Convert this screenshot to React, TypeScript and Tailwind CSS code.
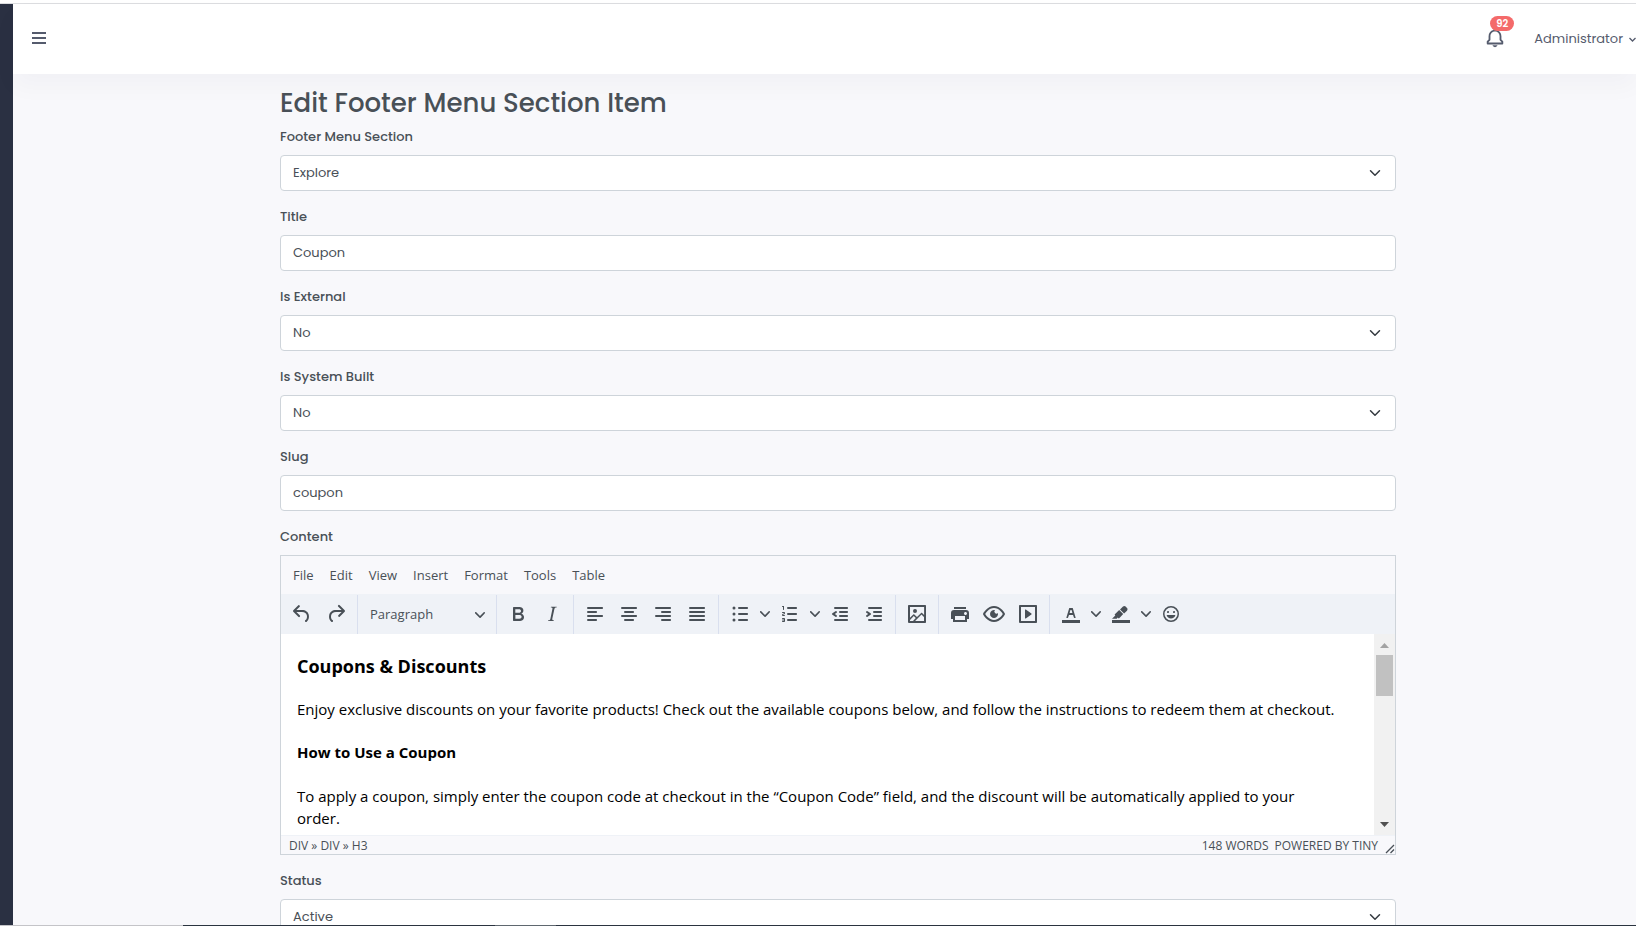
import React, { useId } from "react";

const BODY = "font-['Poppins','Inter',sans-serif]";
const EDITOR = "font-['Segoe_UI','Open_Sans','Noto_Sans',sans-serif]";

const CHEVRON = "M8.7 2.2c.3-.3.8-.3 1 0 .4.4.4.9 0 1.2L5.7 7.8c-.3.3-.9.3-1.2 0L.2 3.4a.8.8 0 0 1 0-1.2c.3-.3.8-.3 1.1 0L5 6l3.7-3.8z";

const bar = (x: number, y: number, w: number) =>
  `M${x} ${y}h${w}c.6 0 1 .4 1 1s-.4 1-1 1h-${w}a1 1 0 0 1 0-2z`;

const icons: Record<string, string> = {
  undo: "M6.4 8H12c3.7 0 6.2 2 6.8 5.1.6 2.7-.4 5.6-2.3 6.8a1 1 0 0 1-1-1.8c1.1-.6 1.8-2.7 1.4-4.6-.5-2.1-2.1-3.5-4.9-3.5H6.4l3.3 3.3a1 1 0 1 1-1.4 1.4l-5-5a1 1 0 0 1 0-1.4l5-5a1 1 0 0 1 1.4 1.4L6.4 8z",
  redo: "M17.6 10H12c-2.8 0-4.4 1.4-4.9 3.5-.4 2 .3 4 1.4 4.6a1 1 0 1 1-1 1.8c-2-1.2-2.9-4.1-2.3-6.8.6-3 3-5.1 6.8-5.1h5.6l-3.3-3.3a1 1 0 1 1 1.4-1.4l5 5a1 1 0 0 1 0 1.4l-5 5a1 1 0 0 1-1.4-1.4l3.3-3.3z",
  bold: "M7.8 19c-.3 0-.5 0-.6-.2l-.2-.5V5.7c0-.2 0-.4.2-.5l.6-.2h5c1.5 0 2.7.3 3.5 1 .7.6 1.1 1.4 1.1 2.5a3 3 0 0 1-.6 1.9c-.4.6-1 1-1.6 1.2.4.1.9.3 1.3.6s.8.7 1 1.2c.4.4.5 1 .5 1.6 0 1.3-.4 2.3-1.3 3-.8.7-2.1 1-3.8 1H7.8zm5-8.3c.6 0 1.2-.1 1.6-.5.4-.3.6-.7.6-1.3 0-1.1-.8-1.7-2.3-1.7H9.3v3.5h3.4zm.5 6c.7 0 1.3-.1 1.7-.4.4-.4.6-.9.6-1.5s-.2-1-.7-1.4c-.4-.3-1-.4-2-.4H9.4v3.8h4z",
  italic: "M16.7 4.7l-.1.9h-.3c-.6 0-1 0-1.4.3-.3.3-.4.6-.5 1.1l-2.1 9.8v.6c0 .5.4.8 1.4.8h.2l-.2.8H8l.2-.8h.2c1.1 0 1.8-.5 2-1.5l2-9.8.1-.5c0-.6-.4-.8-1.4-.8h-.3l.2-.9h5.8z",
  left: bar(5, 5, 14) + bar(5, 9, 8) + bar(5, 13, 14) + bar(5, 17, 8),
  center: bar(5, 5, 14) + bar(8, 9, 8) + bar(5, 13, 14) + bar(8, 17, 8),
  right: bar(5, 5, 14) + bar(11, 9, 8) + bar(5, 13, 14) + bar(11, 17, 8),
  justify: bar(5, 5, 14) + bar(5, 9, 14) + bar(5, 13, 14) + bar(5, 17, 14),
  bullets:
    bar(11, 5, 8) + bar(11, 11, 8) + bar(11, 17, 8) +
    "M4.5 6a1.5 1.5 0 1 1 3 0 1.5 1.5 0 0 1-3 0zM4.5 12a1.5 1.5 0 1 1 3 0 1.5 1.5 0 0 1-3 0zM4.5 18a1.5 1.5 0 1 1 3 0 1.5 1.5 0 0 1-3 0z",
  numbers:
    bar(10, 5, 8) + bar(10, 11, 8) + bar(10, 17, 8) +
    "M6 4v3.5c0 .3-.2.5-.5.5a.5.5 0 0 1-.5-.5V5h-.5a.5.5 0 0 1 0-1H6zM5 12.8l.2.2h1.3c.3 0 .5.2.5.5s-.2.5-.5.5H4.9a1 1 0 0 1-.9-1V13c0-.4.3-.8.6-1l1.2-.4.2-.3a.2.2 0 0 0-.2-.2H4.5a.5.5 0 0 1-.5-.5c0-.3.2-.5.5-.5h1.6c.5 0 .9.4.9 1v.1c0 .4-.3.8-.6 1l-1.2.4-.2.3zM7 17v2c0 .6-.4 1-1 1H4.5a.5.5 0 0 1 0-1h1.2c.2 0 .3-.1.3-.3 0-.2-.1-.3-.3-.3H4.4a.4.4 0 1 1 0-.8h1.3c.2 0 .3-.1.3-.3 0-.2-.1-.3-.3-.3H4.5a.5.5 0 1 1 0-1H6c.6 0 1 .4 1 1z",
  outdent:
    bar(7, 5, 12) + bar(12, 9, 7) + bar(12, 13, 7) + bar(7, 17, 12) +
    "M8.6 13.2a1 1 0 0 1-1.2 1.6l-3-2a1 1 0 0 1 0-1.6l3-2a1 1 0 0 1 1.2 1.6L6.8 12l1.8 1.2z",
  indent:
    bar(7, 5, 12) + bar(12, 9, 7) + bar(12, 13, 7) + bar(7, 17, 12) +
    "M4.4 13.2a1 1 0 1 0 1.2 1.6l3-2a1 1 0 0 0 0-1.6l-3-2a1 1 0 1 0-1.2 1.6L6.2 12l-1.8 1.2z",
  image: "M5 15.7l3.3-3.2c.3-.3.7-.3 1 0L12 15l4.1-4c.3-.4.8-.4 1 0l2 1.9V5H5v10.7zM5 18v1h3l2.8-2.9-2-2L5 17.9zM19 15l-2.5-2.4-6.4 6.5H19v-4zM4 3h16c.6 0 1 .4 1 1v16c0 .6-.4 1-1 1H4a1 1 0 0 1-1-1V4c0-.6.4-1 1-1zM10 11a2 2 0 1 0 0-4 2 2 0 0 0 0 4z",
  print: "M18 8H6a3 3 0 0 0-3 3v6h2v3h14v-3h2v-6a3 3 0 0 0-3-3zm-1 10H7v-4h10v4zm.5-5c-.8 0-1.5-.7-1.5-1.5s.7-1.5 1.5-1.5 1.5.7 1.5 1.5-.7 1.5-1.5 1.5zM18 5H6v2h12V5z",
  preview: "M3.2 12a16.2 16.2 0 0 0 2.1 2.8C7.3 16.8 9.5 18 12 18s4.7-1.2 6.7-3.2a16.2 16.2 0 0 0 2.1-2.8 15.7 15.7 0 0 0-2.1-2.8C16.7 7.2 14.5 6 12 6S7.3 7.2 5.3 9.2A16.2 16.2 0 0 0 3.2 12zM1.1 11.5l.7-1.2L4 7.8C6.2 5.4 8.9 4 12 4s5.8 1.4 8.1 3.8a18.2 18.2 0 0 1 2.8 3.7v1a18.2 18.2 0 0 1-2.8 3.7C17.8 18.6 15.1 20 12 20s-5.8-1.4-8.1-3.8a18.2 18.2 0 0 1-2.8-3.7zM13 8.1A2 2 0 0 0 15.9 11 4 4 0 1 1 13 8.1z",
  embed: "M4 3h16c.6 0 1 .4 1 1v16c0 .6-.4 1-1 1H4a1 1 0 0 1-1-1V4c0-.6.4-1 1-1zm1 2v14h14V5H5zm4.8 2.6l5.6 4a.5.5 0 0 1 0 .8l-5.6 4A.5.5 0 0 1 9 16V8a.5.5 0 0 1 .8-.4z",
  color: "M3 18h18v3H3zM8.7 16h-.8a.5.5 0 0 1-.5-.6l2.7-9c.1-.3.3-.4.5-.4h2.8c.2 0 .4.1.5.4l2.7 9a.5.5 0 0 1-.5.6h-.8a.5.5 0 0 1-.4-.4l-.7-2.2c0-.3-.3-.4-.5-.4h-3.4c-.2 0-.4.1-.5.4l-.7 2.2c0 .3-.2.4-.4.4zM11.3 8.4l-.6 2a.5.5 0 0 0 .5.6h1.6a.5.5 0 0 0 .5-.6l-.6-2c0-.3-.3-.4-.5-.4h-.4c-.2 0-.4.1-.5.4z",
  highlight: "M3 18h18v3H3zM7.7 16.7H3l3.3-3.3-.7-.8L10.2 8l4 4.1-4 4.2c-.2.2-.6.2-.8 0l-.6-.7-1.1 1.1zM11 7.4l3-2.9a2 2 0 0 1 2.6 0L18 6c.7.7.7 2 0 2.7l-2.9 2.9z",
  emoji: "M9 11c.6 0 1-.4 1-1s-.4-1-1-1a1 1 0 0 0-1 1c0 .6.4 1 1 1zm6 0c.6 0 1-.4 1-1s-.4-1-1-1a1 1 0 0 0-1 1c0 .6.4 1 1 1zm-3 5.5c2.1 0 4-1.5 4.4-3.5H7.6c.5 2 2.3 3.5 4.4 3.5zM12 4a8 8 0 1 0 0 16 8 8 0 0 0 0-16zm0 14.5a6.5 6.5 0 1 1 0-13 6.5 6.5 0 0 1 0 13z",
};

function Tool({ icon, label, split }: { icon: string; label: string; split?: boolean }) {
  return (
    <div className="flex">
      <button type="button" aria-label={label} className="flex h-[34px] w-[34px] items-center justify-center">
        <svg width="24" height="24" viewBox="0 0 24 24" fill="currentColor" fillRule="evenodd">
          <path d={icons[icon]} />
        </svg>
      </button>
      {split && (
        <button type="button" aria-label={`${label} options`} className="flex h-[34px] w-4 items-center justify-center">
          <svg width="10" height="10" viewBox="0 0 10 10" fill="currentColor">
            <path d={CHEVRON} />
          </svg>
        </button>
      )}
    </div>
  );
}

function Group({ children, last }: { children: React.ReactNode; last?: boolean }) {
  return (
    <div className={`flex h-[39px] items-start px-1 pt-0.5 ${last ? "" : "border-r border-[#d9dfee]"}`}>{children}</div>
  );
}

const labelClass = "mb-2 block text-[13px] leading-5 font-medium text-[#495057]";
const controlClass =
  "block h-9 w-full rounded border border-[#ced4da] bg-white px-3 text-[13px] text-[#495057] outline-none";

function TextField({ label, value }: { label: string; value: string }) {
  const id = useId();
  return (
    <div className="mb-4">
      <label htmlFor={id} className={labelClass}>{label}</label>
      <input id={id} type="text" defaultValue={value} className={controlClass} />
    </div>
  );
}

function SelectField({ label, options }: { label: string; options: string[] }) {
  const id = useId();
  return (
    <div className="mb-4">
      <label htmlFor={id} className={labelClass}>{label}</label>
      <div className="relative">
        <select id={id} className={`${controlClass} appearance-none`}>
          {options.map((o) => (
            <option key={o}>{o}</option>
          ))}
        </select>
        <svg className="pointer-events-none absolute top-3 right-[15px]" width="12" height="12" viewBox="0 0 16 16" fill="none" stroke="#343a40" strokeWidth="2" strokeLinecap="round" strokeLinejoin="round">
          <path d="M2 5l6 6 6-6" />
        </svg>
      </div>
    </div>
  );
}

function Editor() {
  return (
    <div className={`${EDITOR} mb-4 flex h-[300px] flex-col border border-[#ced4da] bg-[#f8f8fb] text-[#495057]`}>
      <div className="flex h-[38px] shrink-0 items-center px-1 pt-0.5">
        {["File", "Edit", "View", "Insert", "Format", "Tools", "Table"].map((m) => (
          <button key={m} type="button" className="px-2 text-[13px]">{m}</button>
        ))}
      </div>
      <div className="flex h-10 shrink-0 items-end overflow-hidden bg-[#eff2f7]">
        <Group>
          <Tool icon="undo" label="Undo" />
          <Tool icon="redo" label="Redo" />
        </Group>
        <Group>
          <button type="button" className="flex h-[34px] w-[130px] items-center justify-between pt-0.5 pr-[7px] pl-2 text-[13px]">
            Paragraph
            <svg width="10" height="10" viewBox="0 0 10 10" fill="currentColor">
              <path d={CHEVRON} />
            </svg>
          </button>
        </Group>
        <Group>
          <Tool icon="bold" label="Bold" />
          <Tool icon="italic" label="Italic" />
        </Group>
        <Group>
          <Tool icon="left" label="Align left" />
          <Tool icon="center" label="Align center" />
          <Tool icon="right" label="Align right" />
          <Tool icon="justify" label="Justify" />
        </Group>
        <Group>
          <Tool icon="bullets" label="Bullet list" split />
          <Tool icon="numbers" label="Numbered list" split />
          <Tool icon="outdent" label="Decrease indent" />
          <Tool icon="indent" label="Increase indent" />
        </Group>
        <Group>
          <Tool icon="image" label="Insert image" />
        </Group>
        <Group>
          <Tool icon="print" label="Print" />
          <Tool icon="preview" label="Preview" />
          <Tool icon="embed" label="Insert media" />
        </Group>
        <Group last>
          <Tool icon="color" label="Text color" split />
          <Tool icon="highlight" label="Background color" split />
          <Tool icon="emoji" label="Emoticons" />
        </Group>
      </div>
      <div className="flex min-h-0 grow bg-white text-black">
        <div className="grow overflow-hidden pt-5 pr-9 pl-4 text-[15px] leading-[22px]">
          <h3 className="mb-5 text-lg leading-6 font-bold">Coupons &amp; Discounts</h3>
          <p className="mb-[21px]">Enjoy exclusive discounts on your favorite products! Check out the available coupons below, and follow the instructions to redeem them at checkout.</p>
          <h4 className="mb-[22px] font-bold">How to Use a Coupon</h4>
          <p>To apply a coupon, simply enter the coupon code at checkout in the “Coupon Code” field, and the discount will be automatically applied to your order.</p>
        </div>
        <div className="flex w-[21px] shrink-0 flex-col items-center bg-[#f1f1f1]">
          <svg width="9" height="21" viewBox="0 0 9 21" fill="#a3a3a3"><path d="M0 14l4.5-5L9 14z" /></svg>
          <div className="h-[41px] w-[17px] bg-[#c1c1c1]" />
          <svg className="mt-auto" width="9" height="21" viewBox="0 0 9 21" fill="#505050"><path d="M0 8h9l-4.5 5z" /></svg>
        </div>
      </div>
      <div className="flex h-[19px] shrink-0 items-center border-t border-[#eff2f7] pl-2 text-xs">
        <span className="pt-0.5">DIV » DIV » H3</span>
        <span className="ml-auto pt-0.5">148 WORDS</span>
        <a href="#tiny" className="ml-1.5 pt-0.5">POWERED BY TINY</a>
        <svg className="ml-[7px] self-end" width="10" height="10" viewBox="0 0 10 10" stroke="#495057" strokeWidth="1.3" fill="none">
          <path d="M1 9L9 1M5.5 9L9 5.5" />
        </svg>
      </div>
    </div>
  );
}

export default function App() {
  return (
    <div className={`${BODY} relative flex h-screen flex-col overflow-hidden bg-[#f8f8fb]`}>
      <div className="h-1 shrink-0 border-b border-[#dcdde0] bg-white" />
      <div className="flex min-h-0 grow">
        <aside className="w-[13px] shrink-0 bg-[#2a3042]" />
        <div className="flex min-w-0 grow flex-col">
          <header className="flex h-[70px] shrink-0 items-center bg-white pl-[18px] text-[#555b6d] shadow-[0_12px_24px_rgba(18,38,63,0.03)]">
            <button type="button" aria-label="Toggle menu" className="pb-0.5">
              <svg width="16" height="16" viewBox="0 0 16 16" fill="currentColor">
                <path d="M1 2h14v2H1zM1 7h14v2H1zM1 12h14v2H1z" />
              </svg>
            </button>
            <button type="button" aria-label="Notifications" className="relative ml-auto pb-0.5">
              <svg width="22" height="22" viewBox="0 0 24 24" fill="currentColor">
                <path d="M19 13.586V10c0-3.217-2.185-5.927-5.145-6.742C13.562 2.520 12.846 2 12 2s-1.562.52-1.855 1.258C7.185 4.074 5 6.783 5 10v3.586l-1.707 1.707A.996.996 0 0 0 3 16v2a1 1 0 0 0 1 1h16a1 1 0 0 0 1-1v-2a.996.996 0 0 0-.293-.707L19 13.586zM19 17H5v-.586l1.707-1.707A.996.996 0 0 0 7 14v-4c0-2.757 2.243-5 5-5s5 2.243 5 5v4c0 .266.105.52.293.707L19 16.414V17zM12 22a2.980 2.980 0 0 0 2.818-2H9.182A2.980 2.980 0 0 0 12 22z" />
              </svg>
              <span className="absolute -top-[11px] left-[6px] flex h-[15px] w-6 items-center justify-center rounded-full bg-[#f46a6a] text-[10px] font-semibold text-white">92</span>
            </button>
            <button type="button" className="ml-7 flex items-center gap-1.5 text-[13px]">
              Administrator
              <svg width="7" height="7" viewBox="0 0 7 7" fill="none" stroke="currentColor" strokeWidth="1.3">
                <path d="M.5 2l3 3 3-3" />
              </svg>
            </button>
          </header>
          <main className="pt-[14px] pl-[27px]">
            <form className="mx-auto max-w-[1116px]">
              <h1 className="mb-2 text-[26px] leading-[31px] font-medium text-[#495057]">Edit Footer Menu Section Item</h1>
              <SelectField label="Footer Menu Section" options={["Explore"]} />
              <TextField label="Title" value="Coupon" />
              <SelectField label="Is External" options={["No", "Yes"]} />
              <SelectField label="Is System Built" options={["No", "Yes"]} />
              <TextField label="Slug" value="coupon" />
              <div className={labelClass}>Content</div>
              <Editor />
              <SelectField label="Status" options={["Active", "Inactive"]} />
            </form>
          </main>
        </div>
      </div>
      <div className="absolute inset-x-0 bottom-0 flex h-px">
        <div className="w-[183px] bg-[#c4c4c8]" />
        <div className="w-[312px] bg-[#2b3440]" />
        <div className="w-[61px] bg-[#5f676f]" />
        <div className="grow bg-[#2b3440]" />
      </div>
    </div>
  );
}
